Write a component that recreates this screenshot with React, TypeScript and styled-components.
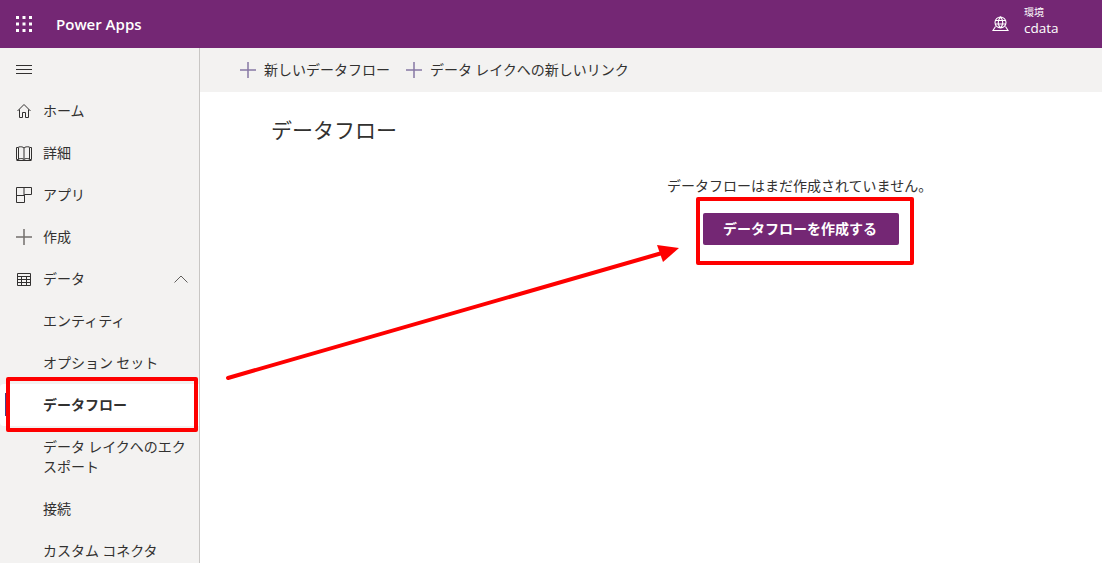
import React from 'react'
import styled, { createGlobalStyle } from 'styled-components'

const FONT = `"Segoe UI", "Open Sans", "Noto Sans CJK JP", sans-serif`
const JP = `"Noto Sans CJK JP", "Noto Sans", sans-serif`

const GlobalStyle = createGlobalStyle`
  html, body {
    margin: 0;
    height: 100%;
    overflow: hidden;
    background: #fff;
    font-family: ${JP};
  }
  * { box-sizing: border-box; }
`

const Page = styled.div`
  position: relative;
  width: 1102px;
  height: 563px;
  display: flex;
  flex-direction: column;
  overflow: hidden;
`

const Header = styled.header`
  height: 48px;
  flex: none;
  background: #742774;
  color: #fff;
  display: flex;
  align-items: center;
`

const Waffle = styled.div`
  width: 48px;
  display: flex;
  justify-content: center;
`

const AppName = styled.div`
  font-family: ${FONT};
  font-size: 15px;
  font-weight: 600;
  margin-left: 8px;
  padding-bottom: 1px;
`

const Env = styled.div`
  margin-left: auto;
  width: 110px;
  display: flex;
  align-items: center;
  gap: 15px;
`

const EnvText = styled.div`
  display: flex;
  flex-direction: column;
  padding-bottom: 7px;
`

const EnvLabel = styled.span`
  font-size: 10px;
  line-height: 14px;
`

const EnvName = styled.span`
  font-family: ${FONT};
  font-size: 13.5px;
  line-height: 18px;
`

const Body = styled.div`
  flex: 1;
  display: flex;
  min-height: 0;
`

const Sidebar = styled.nav`
  width: 200px;
  flex: none;
  background: #f3f2f1;
  border-right: 1px solid #c8c6c4;
  padding-top: 1px;
  overflow: hidden;
`

const Burger = styled.div`
  height: 41px;
  padding-left: 16px;
  display: flex;
  align-items: center;
`

const NavRow = styled.div<{ $active?: boolean; $tall?: boolean }>`
  position: relative;
  min-height: ${p => (p.$tall ? '62px' : '42px')};
  flex: none;
  display: flex;
  align-items: center;
  padding-left: 16px;
  background: ${p => (p.$active ? '#fff' : 'transparent')};
  border-radius: ${p => (p.$active ? '4px 0 0 4px' : '0')};
  color: #323130;
  font-size: 14px;
  font-weight: ${p => (p.$active ? 700 : 400)};
  line-height: 20px;
`

const ActiveMark = styled.span`
  position: absolute;
  left: 5px;
  top: 9px;
  width: 2px;
  height: 23px;
  background: #40408a;
`

const NavIcon = styled.span`
  width: 27px;
  height: 18px;
  flex: none;
  display: flex;
  align-items: center;
`

const NavLabel = styled.span<{ $sub?: boolean }>`
  margin-left: ${p => (p.$sub ? '27px' : '0')};
  width: ${p => (p.$sub ? '146px' : 'auto')};
  padding-bottom: 3px;
`

const Chevron = styled.span`
  margin-left: auto;
  margin-right: 11px;
  display: flex;
`

const Main = styled.main`
  flex: 1;
  min-width: 0;
  display: flex;
  flex-direction: column;
`

const Toolbar = styled.div`
  height: 44px;
  flex: none;
  background: #f3f2f1;
  display: flex;
  align-items: center;
  padding-left: 40px;
  gap: 16px;
`

const ToolButton = styled.div`
  display: flex;
  align-items: center;
  gap: 8px;
  color: #323130;
  font-size: 14px;
`

const ToolLabel = styled.span`
  padding-bottom: 2px;
`

const Title = styled.h1`
  margin: 22px 0 0 71px;
  font-size: 21px;
  font-weight: 400;
  line-height: 30px;
  color: #323130;
`

const Empty = styled.div`
  margin: 31px 0 0 0;
  display: flex;
  flex-direction: column;
`

const EmptyText = styled.p`
  margin: 0 0 0 467px;
  font-size: 14px;
  line-height: 20px;
  color: #323130;
  white-space: nowrap;
`

const CreateButton = styled.button`
  margin: 18px 0 0 503px;
  width: 196px;
  height: 32px;
  border: 0;
  border-radius: 2px;
  background: #742774;
  color: #fff;
  font-family: ${JP};
  font-size: 14px;
  font-weight: 700;
  padding: 0 2px 3px 0;
`

const Callout = styled.div<{ $x: number; $y: number; $w: number; $h: number }>`
  position: absolute;
  left: ${p => p.$x}px;
  top: ${p => p.$y}px;
  width: ${p => p.$w}px;
  height: ${p => p.$h}px;
  border: 4px solid #fe0000;
  border-radius: 2px;
  pointer-events: none;
`

const ArrowLayer = styled.svg`
  position: absolute;
  left: 0;
  top: 0;
  pointer-events: none;
`

const Line = ({ d, color = '#323130', w = 1 }: { d: string; color?: string; w?: number }) => (
  <path d={d} fill="none" stroke={color} strokeWidth={w} />
)

const WaffleIcon = () => (
  <svg width="16" height="16" viewBox="0 0 16 16" fill="#fff">
    {[0, 6.5, 13].flatMap(y =>
      [0, 6.5, 13].map(x => <rect key={`${x}-${y}`} x={x} y={y} width="3" height="3" />),
    )}
  </svg>
)

const GlobeIcon = () => (
  <svg width="17" height="16" viewBox="0 0 17 16">
    <Line color="#fff" d="M8.5 1a5.5 5.5 0 1 0 0 11a5.5 5.5 0 1 0 0-11M8.5 1c-3 3-3 8 0 11M8.5 1c3 3 3 8 0 11M3.5 4.5h10M3.2 8h10.6M3.5 10.5L1 14.5h15L13.5 10.5" w={1.1} />
  </svg>
)

const BurgerIcon = () => (
  <svg width="16" height="11" viewBox="0 0 16 11">
    <Line d="M0 1.5h16M0 5.5h16M0 9.5h16" />
  </svg>
)

const HomeIcon = () => (
  <svg width="16" height="16" viewBox="0 0 16 16">
    <Line d="M1.5 8L8 1.5L14.5 8M3.5 6.5V14.5H6.5V9.5H9.5V14.5H12.5V6.5" />
  </svg>
)

const BookIcon = () => (
  <svg width="16" height="15" viewBox="0 0 16 15">
    <Line d="M.5 1.5H2.5V13.5H.5V1.5M15.5 1.5H13.5V13.5H15.5V1.5M2.5 1C5 .5 7 .8 8 2V13.5C7 12.5 5 12.2 2.5 13M13.5 1C11 .5 9 .8 8 2M8 13.5C9 12.5 11 12.2 13.5 13M.5 14.5H15.5" />
  </svg>
)

const AppsIcon = () => (
  <svg width="16" height="16" viewBox="0 0 16 16">
    <Line d="M.5.5H15.5V7.5H8.5V15.5H.5V.5M.5 8.5H8.5M8 .5V8" />
  </svg>
)

const PlusIcon = ({ color = '#736f6c' }: { color?: string }) => (
  <svg width="16" height="16" viewBox="0 0 16 16">
    <Line color={color} d="M0 8h16M8 0v16" w={1.5} />
  </svg>
)

const TableIcon = () => (
  <svg width="14" height="13" viewBox="0 0 14 13">
    <Line d="M.5.5H13.5V12.5H.5V.5M.5 3.5H13.5M.5 6.5H13.5M.5 9.5H13.5M4.5 3.5V12.5M9.5 3.5V12.5" />
  </svg>
)

const TableSlot = styled.span`
  margin-left: 1px;
  display: flex;
`

const ChevronUp = () => (
  <svg width="14" height="8" viewBox="0 0 14 8">
    <Line color="#605e5c" d="M.5 7.5L7 1L13.5 7.5" />
  </svg>
)

export default function App() {
  return (
    <Page>
      <GlobalStyle />
      <Header>
        <Waffle>
          <WaffleIcon />
        </Waffle>
        <AppName>Power Apps</AppName>
        <Env>
          <GlobeIcon />
          <EnvText>
            <EnvLabel>環境</EnvLabel>
            <EnvName>cdata</EnvName>
          </EnvText>
        </Env>
      </Header>
      <Body>
        <Sidebar>
          <Burger>
            <BurgerIcon />
          </Burger>
          <NavRow>
            <NavIcon><HomeIcon /></NavIcon>
            <NavLabel>ホーム</NavLabel>
          </NavRow>
          <NavRow>
            <NavIcon><BookIcon /></NavIcon>
            <NavLabel>詳細</NavLabel>
          </NavRow>
          <NavRow>
            <NavIcon><AppsIcon /></NavIcon>
            <NavLabel>アプリ</NavLabel>
          </NavRow>
          <NavRow>
            <NavIcon><PlusIcon /></NavIcon>
            <NavLabel>作成</NavLabel>
          </NavRow>
          <NavRow>
            <NavIcon><TableSlot><TableIcon /></TableSlot></NavIcon>
            <NavLabel>データ</NavLabel>
            <Chevron><ChevronUp /></Chevron>
          </NavRow>
          <NavRow><NavLabel $sub>エンティティ</NavLabel></NavRow>
          <NavRow><NavLabel $sub>オプション セット</NavLabel></NavRow>
          <NavRow $active>
            <ActiveMark />
            <NavLabel $sub>データフロー</NavLabel>
          </NavRow>
          <NavRow $tall><NavLabel $sub>データ レイクへのエクスポート</NavLabel></NavRow>
          <NavRow><NavLabel $sub>接続</NavLabel></NavRow>
          <NavRow><NavLabel $sub>カスタム コネクタ</NavLabel></NavRow>
        </Sidebar>
        <Main>
          <Toolbar>
            <ToolButton>
              <PlusIcon color="#8778a4" />
              <ToolLabel>新しいデータフロー</ToolLabel>
            </ToolButton>
            <ToolButton>
              <PlusIcon color="#8778a4" />
              <ToolLabel>データ レイクへの新しいリンク</ToolLabel>
            </ToolButton>
          </Toolbar>
          <Title>データフロー</Title>
          <Empty>
            <EmptyText>データフローはまだ作成されていません。</EmptyText>
            <CreateButton>データフローを作成する</CreateButton>
          </Empty>
        </Main>
      </Body>
      <Callout $x={6} $y={377} $w={192} $h={55} />
      <Callout $x={696} $y={197} $w={218} $h={68} />
      <ArrowLayer width="1102" height="563" viewBox="0 0 1102 563">
        <path d="M228 378L662 253" stroke="#fe0000" strokeWidth="4" strokeLinecap="round" fill="none" />
        <polygon points="679,248 657,245 663,262" fill="#fe0000" />
      </ArrowLayer>
    </Page>
  )
}
